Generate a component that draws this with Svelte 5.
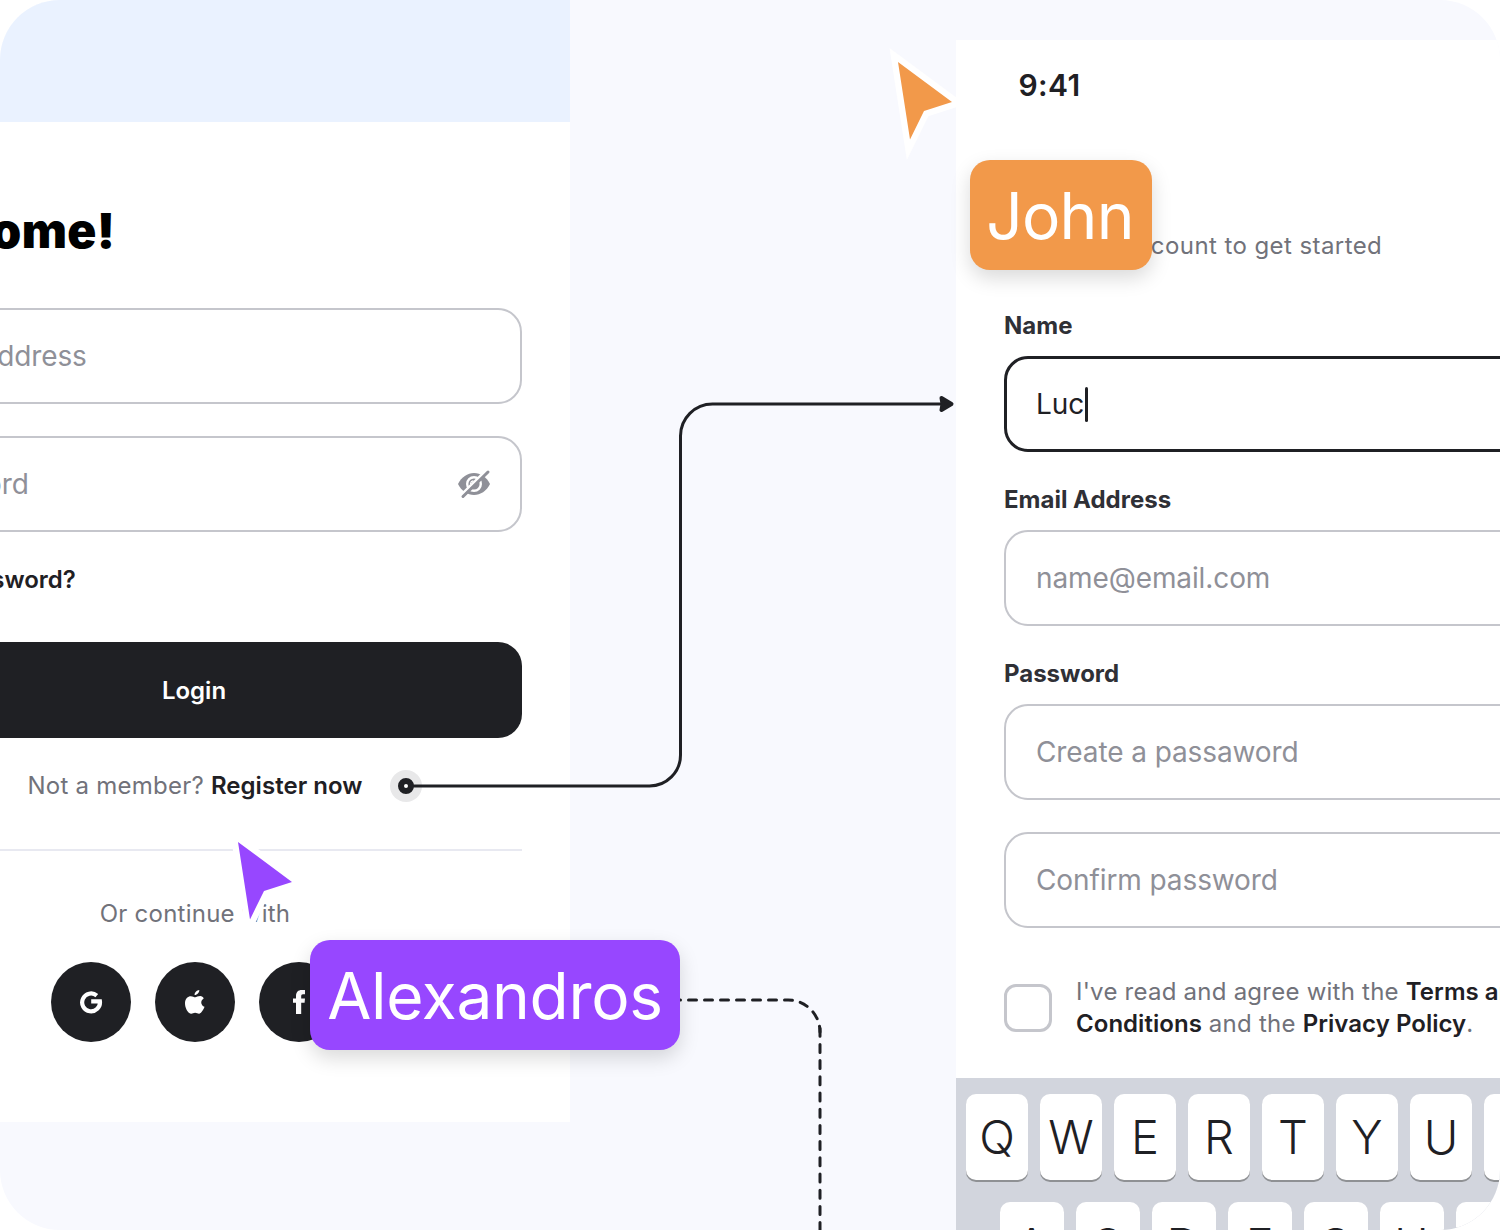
<script>
  const topKeys = [...'QWERTYUIOP'];
  const homeKeys = [...'ASDFGHJKL'];
</script>

<main class="canvas">
  <section class="phone login">
    <div class="hero"></div>
    <div class="login-body">
      <h1>Welcome!</h1>
      <div class="fields">
        <div class="field">Email Address</div>
        <div class="field">
          <span>Password</span>
          <svg class="eye" viewBox="0 0 40 36" width="40" height="36">
            <path d="M4 18C7.500 11 13.500 7 20 7s12.500 4 16 11c-3.500 7-9.500 11-16 11S7.500 25 4 18Z" fill="#8f9098" />
            <circle cx="20" cy="18" r="6.800" fill="#8f9098" stroke="#fff" stroke-width="2.400" />
            <path d="M16.500 17.500a3.400 3.400 0 0 1 2.500-2.700" fill="none" stroke="#fff" stroke-width="1.200" stroke-linecap="round" />
            <path d="M7 29.300 32 4.800" stroke="#fff" stroke-width="3" />
            <path d="M9 30.500 34 6" stroke="#8f9098" stroke-width="3" stroke-linecap="round" />
          </svg>
        </div>
      </div>
      <b class="forgot">Forgot password?</b>
      <div class="submit">Login</div>
      <p class="member">Not a member? <b>Register now</b></p>
      <hr />
      <p class="or">Or continue with</p>
      <div class="socials">
        <span class="social">
          <svg viewBox="0 0 24 24" width="24" height="24">
            <path d="M17.800 5.600A8.900 8.900 0 1 0 20.900 11.300H12.200" fill="none" stroke="#fff" stroke-width="4.200" />
          </svg>
        </span>
        <span class="social">
          <svg viewBox="0 0 24 24" width="24" height="24">
            <path fill="#fff" d="M16.300 0c.2 2.300-1.900 5-4.700 5C11.400 2.600 13.700.3 16.300 0ZM20.700 8.400c-3.700 2.300-3 6.700.8 8.400-.7 2.100-2.900 6.500-5.200 6.900-1.500.2-2.400-.9-4.200-.9-1.800 0-2.600 1.100-4.200.9C4.600 23.200 2 17.500 2 13.200 2 8.600 5 6.200 7.800 6.200c1.900 0 3.200 1.100 4.500 1.100 1.100 0 2.700-1.200 5-1.200 1.600 0 2.700.9 3.400 2.300Z" />
          </svg>
        </span>
        <span class="social">
          <svg viewBox="0 0 24 24" width="24" height="24">
            <path fill="#fff" d="M9 24V12.800H6V8.500h3V6.200C9 2 11.200 0 14.700 0H18v4.200h-2C14.600 4.200 14.200 5 14.200 6.400V8.500H18l-.4 4.300H14.200V24Z" />
          </svg>
        </span>
      </div>
    </div>
  </section>

  <section class="phone signup">
    <div class="time">9:41</div>
    <p class="subtitle">Create an account to get started</p>
    <form>
      <div class="group">
        <b>Name</b>
        <div class="field active">Luc<i class="caret"></i></div>
      </div>
      <div class="group">
        <b>Email Address</b>
        <div class="field">name@email.com</div>
      </div>
      <div class="group">
        <b>Password</b>
        <div class="field">Create a passaword</div>
        <div class="field second">Confirm password</div>
      </div>
      <div class="terms">
        <span class="box"></span>
        <p>I've read and agree with the <b>Terms and<br />Conditions</b> and the <b>Privacy Policy</b>.</p>
      </div>
    </form>
    <div class="keyboard">
      <div class="keys">
        {#each topKeys as key}<span class="key">{key}</span>{/each}
      </div>
      <div class="keys home">
        {#each homeKeys as key}<span class="key">{key}</span>{/each}
      </div>
    </div>
  </section>

  <svg class="overlay" viewBox="0 0 1500 1230" width="1500" height="1230" fill="none">
    <circle cx="406" cy="786" r="16" fill="#1f2024" fill-opacity=".1" />
    <path d="M412 786H649.500a31 31 0 0 0 31-31V436a32 32 0 0 1 32-32H944" stroke="#1f2024" stroke-width="3" />
    <circle cx="406" cy="786" r="5" fill="#fff" stroke="#1f2024" stroke-width="6" />
    <path d="M941.500 398 951.500 404 941.500 410 942.500 404Z" fill="#1f2024" stroke="#1f2024" stroke-width="4" stroke-linejoin="round" />
    <g stroke="#1f2024" stroke-width="3" stroke-linecap="round">
      <path d="M640.500 1000H788a32 32 0 0 1 32 32" stroke-dasharray="8 8" />
      <path d="M820 1028.200V1240" stroke-dasharray="8 8.200" />
    </g>
    <g stroke="#fff" stroke-width="12.500" stroke-miterlimit="8" paint-order="stroke">
      <path d="M898 62 952 102 924 111 910 139.500Z" fill="#f2994a" />
      <path d="M238 842 292 882 264 891 250 919.500Z" fill="#9747ff" />
    </g>
  </svg>
  <div class="tag john">John</div>
  <div class="tag alex">Alexandros</div>
</main>

<style>
  :global(body) {
    margin: 0;
    background: #fff;
  }
  .canvas {
    position: relative;
    display: flex;
    justify-content: space-between;
    box-sizing: border-box;
    width: 1500px;
    height: 1230px;
    overflow: hidden;
    border-radius: 60px;
    background: #f8f9fe;
    color: #1f2024;
    font: 24px/32px Inter, sans-serif;
  }
  p, h1 { margin: 0; }
  b { font-weight: 600; }
  .phone {
    flex: none;
    width: 750px;
    box-sizing: border-box;
    background: #fff;
  }
  .login {
    height: 1122px;
    margin-left: -180px;
  }
  .hero {
    height: 122px;
    background: #eaf2ff;
  }
  .login-body {
    display: flex;
    flex-direction: column;
    padding: 80px 48px 0;
  }
  h1 {
    height: 58px;
    font-size: 48px;
    line-height: 58px;
    font-weight: 900;
    letter-spacing: .36px;
    color: #000;
  }
  .fields {
    display: grid;
    gap: 32px;
    margin-top: 48px;
  }
  .field {
    display: flex;
    align-items: center;
    box-sizing: border-box;
    height: 96px;
    padding: 0 30px;
    border: 2px solid #c5c6cc;
    border-radius: 24px;
    color: #8f9098;
    font-size: 28px;
    letter-spacing: -.1px;
  }
  .eye {
    margin: 0 -4px 0 auto;
  }
  .forgot {
    margin-top: 32px;
  }
  .submit {
    box-sizing: border-box;
    margin-top: 46px;
    height: 96px;
    padding: 1px 2px 0 0;
    border-radius: 24px;
    background: #1f2024;
    color: #fff;
    font-weight: 600;
    line-height: 96px;
    text-align: center;
  }
  .member, .or {
    margin-top: 32px;
    color: #71727a;
    text-align: center;
    letter-spacing: .24px;
  }
  .member b {
    color: #1f2024;
    letter-spacing: .04px;
  }
  hr {
    width: 100%;
    height: 2px;
    margin: 47px 0 15px;
    border: 0;
    background: #e8e9f1;
  }
  .socials {
    display: flex;
    justify-content: center;
    gap: 24px;
    margin-top: 32px;
  }
  .social {
    display: grid;
    place-items: center;
    width: 80px;
    height: 80px;
    border-radius: 50%;
    background: #1f2024;
  }
  .signup {
    display: flex;
    flex-direction: column;
    height: 1190px;
    margin: 40px -206px 0 0;
  }
  .time {
    padding: 29px 62.5px 1px;
    font-size: 30px;
    font-weight: 600;
    letter-spacing: .4px;
  }
  .subtitle {
    margin: 128px 46px 48px;
    color: #71727a;
    letter-spacing: .42px;
  }
  form {
    display: grid;
    gap: 32px;
    padding: 0 48px;
  }
  .group {
    display: flex;
    flex-direction: column;
    gap: 14px;
    color: #2f3036;
  }
  .group b {
    font-weight: 700;
  }
  .active {
    padding: 0 29px;
    border: 3px solid #1f2024;
    color: #1f2024;
  }
  .caret {
    width: 3px;
    height: 35px;
    margin-left: 1px;
    border-radius: 2px;
    background: #1f2024;
  }
  .second { margin-top: 18px; }
  .terms {
    display: flex;
    align-items: center;
    gap: 24px;
    margin-top: 16px;
    color: #71727a;
    letter-spacing: .24px;
  }
  .terms b {
    color: #1f2024;
    letter-spacing: .04px;
  }
  .box {
    flex: none;
    box-sizing: border-box;
    width: 48px;
    height: 48px;
    border: 3px solid #c5c6cc;
    border-radius: 12px;
  }
  .keyboard {
    flex: 1;
    margin-top: 38px;
    padding: 16px 10px 0;
    background: #d2d5dd;
  }
  .keys {
    display: flex;
    gap: 12px;
    margin-bottom: 22px;
  }
  .home {
    margin: 0;
    padding-left: 33.5px;
  }
  .key {
    flex: none;
    width: 62px;
    height: 86px;
    border-radius: 10px;
    background: #fff;
    box-shadow: 0 2px 0 #8f9194;
    font-size: 47px;
    font-weight: 300;
    line-height: 86px;
    text-align: center;
  }
  .home .key { width: 64px; }
  .overlay {
    position: absolute;
    inset: 0;
  }
  .tag {
    position: absolute;
    box-sizing: border-box;
    height: 110px;
    padding-top: 1px;
    border-radius: 20px;
    box-shadow: 0 8px 20px rgba(0, 0, 0, .15);
    color: #fff;
    font-size: 64px;
    line-height: 110px;
    text-align: center;
    letter-spacing: -.3px;
  }
  .john {
    left: 970px;
    top: 160px;
    width: 182px;
    padding-right: 2px;
    background: #f2994a;
    letter-spacing: -.8px;
  }
  .alex {
    left: 310px;
    top: 940px;
    width: 370px;
    background: #9747ff;
  }
</style>
